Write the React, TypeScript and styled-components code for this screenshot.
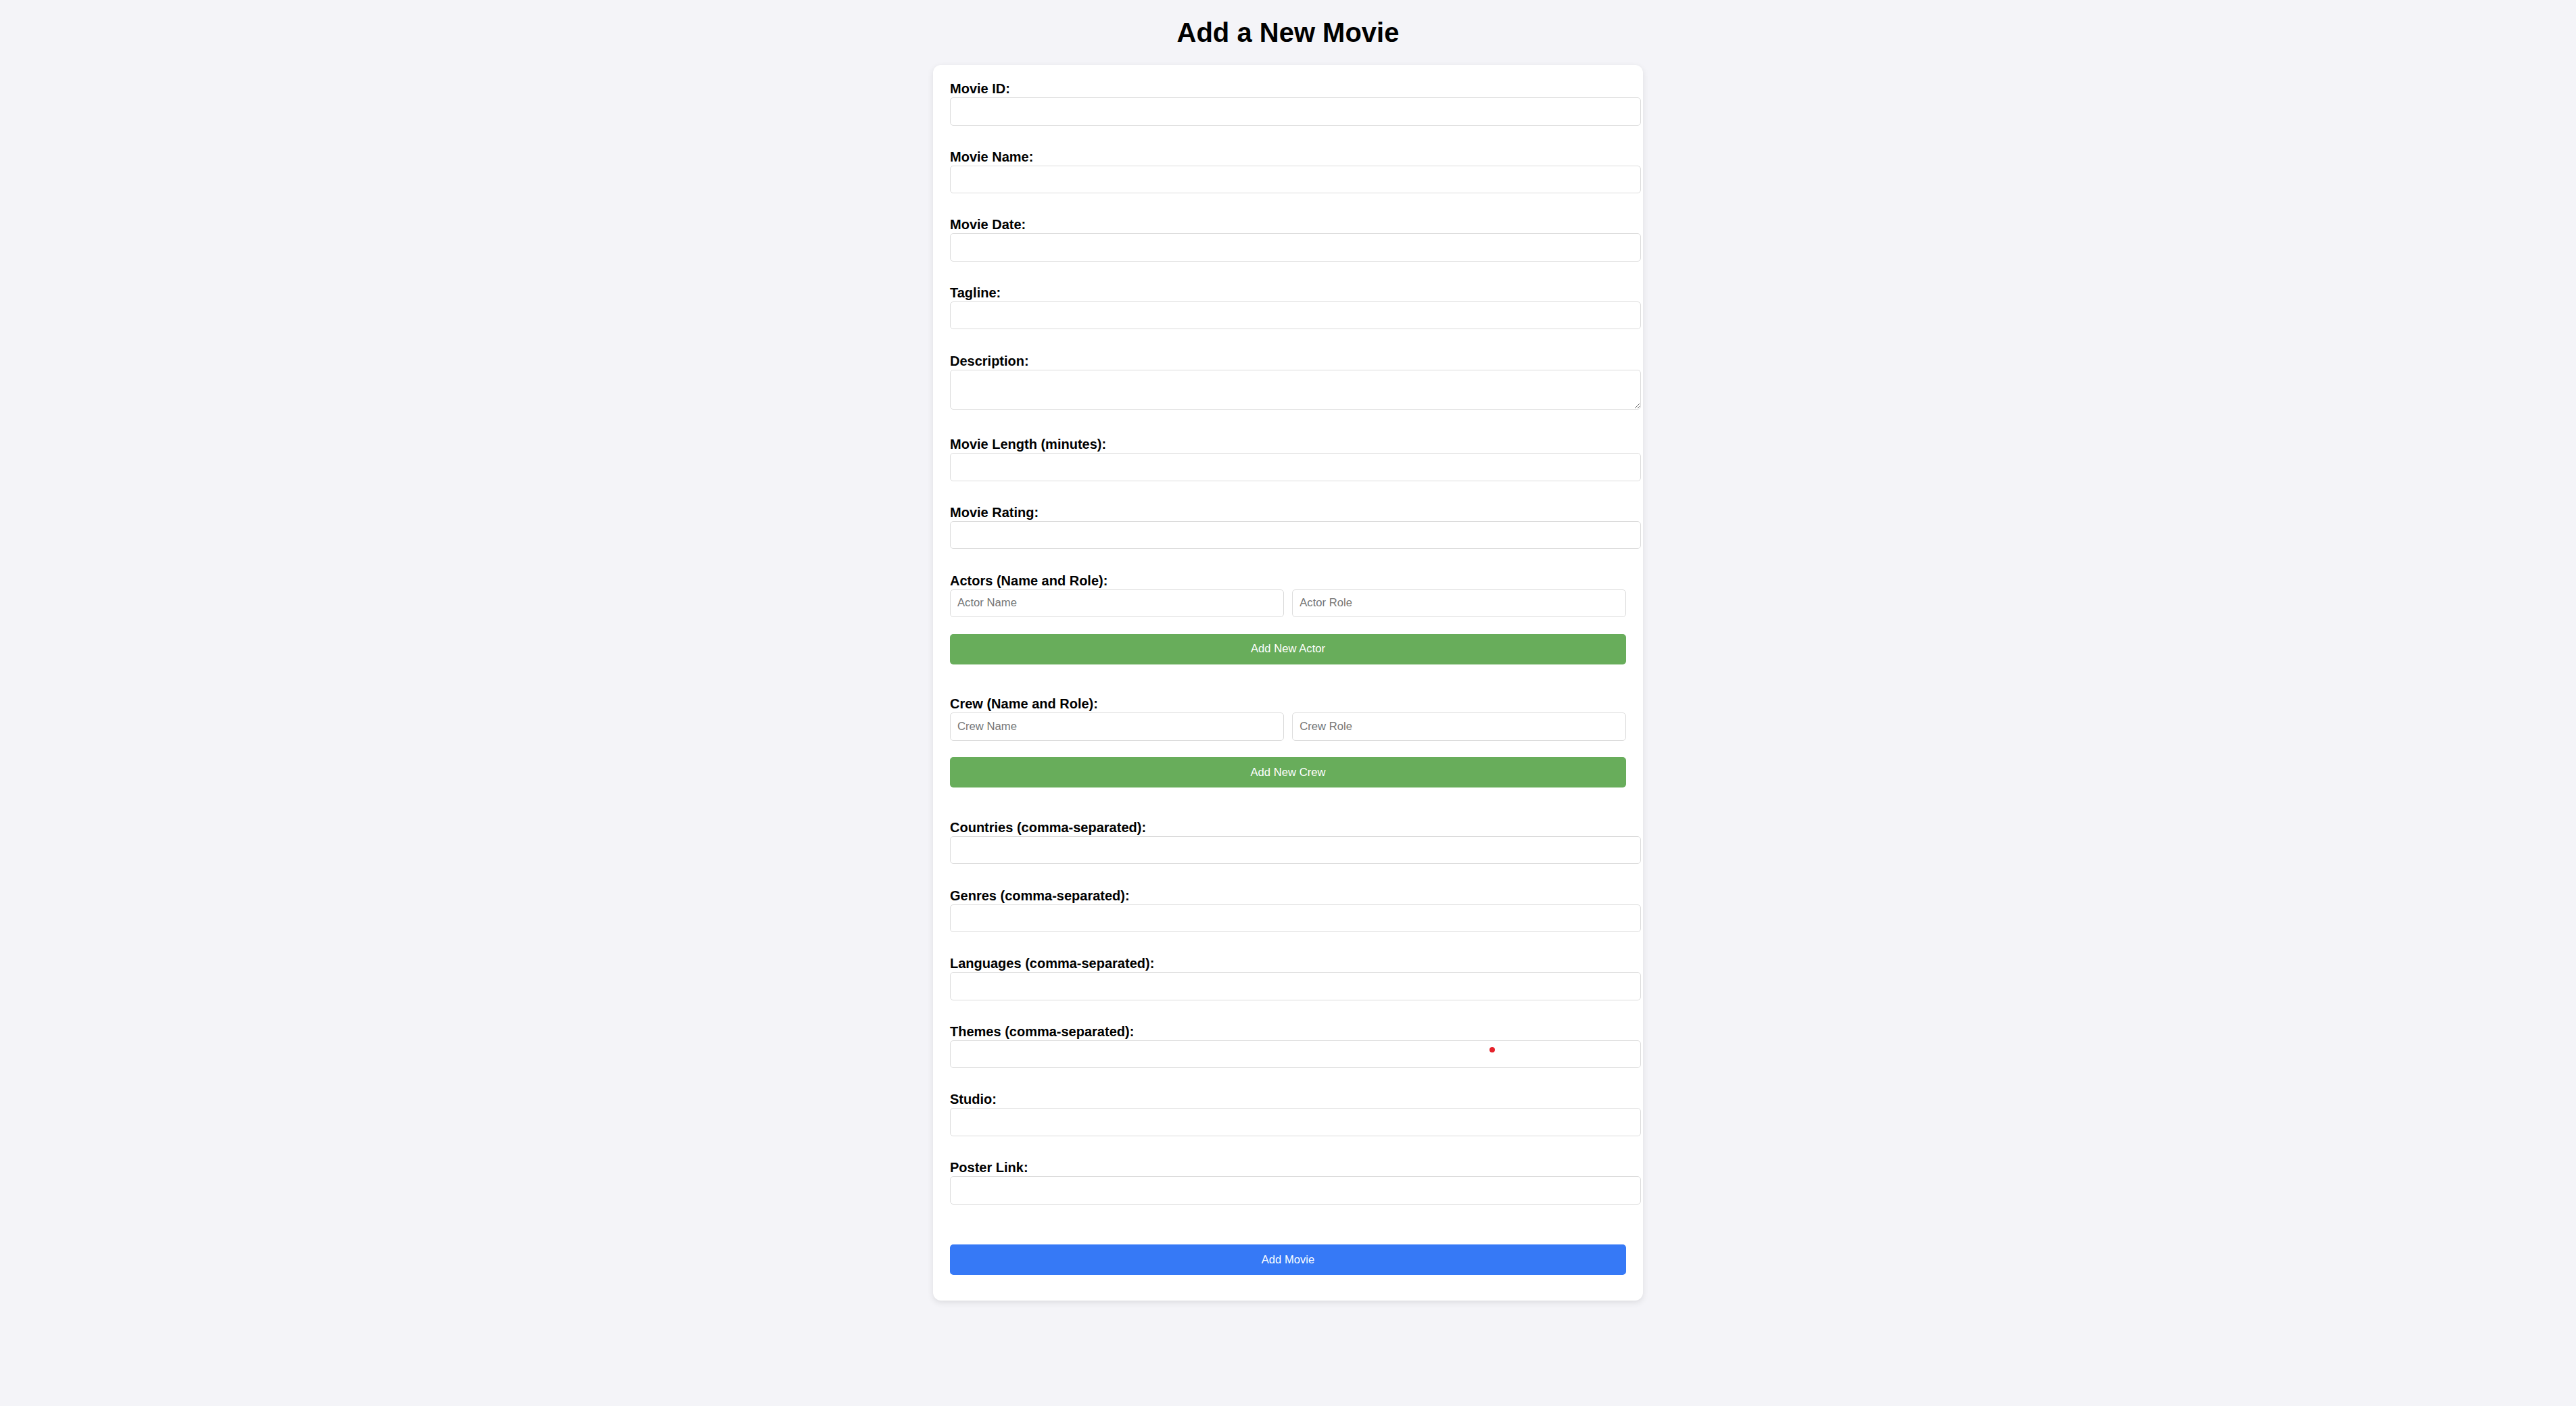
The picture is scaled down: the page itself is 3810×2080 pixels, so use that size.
import React from "react";
import styled, { createGlobalStyle } from "styled-components";

const GlobalStyle = createGlobalStyle`
  html, body {
    margin: 0;
    padding: 0;
    background: #f4f4f8;
  }
  body {
    font-family: "Liberation Sans", Arial, sans-serif;
    color: #000;
  }
  * { box-sizing: border-box; }
`;

const Page = styled.div`
  min-height: 2080px;
  padding-top: 25px;
  background: #f4f4f8;
`;

const Title = styled.h1`
  margin: 0 0 25px;
  font-size: 40px;
  line-height: 46px;
  font-weight: 700;
  text-align: center;
  color: #000;
`;

const Card = styled.form`
  position: relative;
  width: 1050px;
  margin: 0 auto;
  padding: 24px 25px 25px;
  background: #fff;
  border-radius: 12px;
  box-shadow: 0 3px 10px rgba(0, 0, 0, 0.1);
`;

const FormGroup = styled.div`
  display: flow-root;
  margin-bottom: 35.15px;
`;

const Label = styled.label`
  display: block;
  font-size: 20px;
  line-height: 23px;
  font-weight: 700;
  margin-bottom: 1px;
  color: #000;
`;

const fieldBase = `
  display: block;
  font-family: "Liberation Sans", Arial, sans-serif;
  font-size: 16.67px;
  color: #000;
  background: #fff;
  border: 1px solid #dcdcdc;
  border-radius: 5px;
  outline: none;
  &::placeholder { color: #757575; }
`;

const TextInput = styled.input<{ $inRow?: boolean }>`
  ${fieldBase}
  height: 41.5px;
  padding: 0 10px;
  width: ${(p) => (p.$inRow ? "auto" : "calc(100% + 22px)")};
  flex: ${(p) => (p.$inRow ? "1 1 0" : "none")};
  min-width: 0;
`;

const TextArea = styled.textarea`
  ${fieldBase}
  width: calc(100% + 22px);
  height: 59px;
  padding: 10px;
  margin-bottom: 5.6px;
  resize: both;
`;

const InputRow = styled.div`
  display: flex;
  gap: 12.5px;
`;

const Button = styled.button<{ $variant: "green" | "blue" }>`
  display: block;
  width: 100%;
  height: 45px;
  margin: 24.5px 0 12.5px;
  border: none;
  border-radius: 5px;
  background: ${(p) => (p.$variant === "green" ? "#68ad5b" : "#3679f6")};
  color: #fff;
  font-family: "Liberation Sans", Arial, sans-serif;
  font-size: 16.67px;
  cursor: pointer;
`;

const SubmitGroup = styled.div`
  display: flow-root;
`;

const Dot = styled.span`
  position: absolute;
  left: 823px;
  top: 1453px;
  width: 8px;
  height: 8px;
  border-radius: 50%;
  background: #e5222b;
`;

const simpleFields: { label: string; area?: boolean }[] = [
  { label: "Movie ID:" },
  { label: "Movie Name:" },
  { label: "Movie Date:" },
  { label: "Tagline:" },
  { label: "Description:", area: true },
  { label: "Movie Length (minutes):" },
  { label: "Movie Rating:" },
];

const listFields = [
  "Countries (comma-separated):",
  "Genres (comma-separated):",
  "Languages (comma-separated):",
  "Themes (comma-separated):",
  "Studio:",
  "Poster Link:",
];

const Field: React.FC<{ label: string; area?: boolean }> = ({ label, area }) => (
  <FormGroup>
    <Label>{label}</Label>
    {area ? <TextArea /> : <TextInput type="text" />}
  </FormGroup>
);

const PairGroup: React.FC<{ label: string; name: string; role: string; button: string }> = ({
  label,
  name,
  role,
  button,
}) => (
  <FormGroup>
    <Label>{label}</Label>
    <InputRow>
      <TextInput $inRow type="text" placeholder={name} />
      <TextInput $inRow type="text" placeholder={role} />
    </InputRow>
    <Button type="button" $variant="green">
      {button}
    </Button>
  </FormGroup>
);

export default function App() {
  return (
    <>
      <GlobalStyle />
      <Page>
        <Title>Add a New Movie</Title>
        <Card onSubmit={(e) => e.preventDefault()}>
          {simpleFields.map((f) => (
            <Field key={f.label} label={f.label} area={f.area} />
          ))}
          <PairGroup label="Actors (Name and Role):" name="Actor Name" role="Actor Role" button="Add New Actor" />
          <PairGroup label="Crew (Name and Role):" name="Crew Name" role="Crew Role" button="Add New Crew" />
          {listFields.map((l) => (
            <Field key={l} label={l} />
          ))}
          <SubmitGroup>
            <Button type="submit" $variant="blue">
              Add Movie
            </Button>
          </SubmitGroup>
          <Dot />
        </Card>
      </Page>
    </>
  );
}
